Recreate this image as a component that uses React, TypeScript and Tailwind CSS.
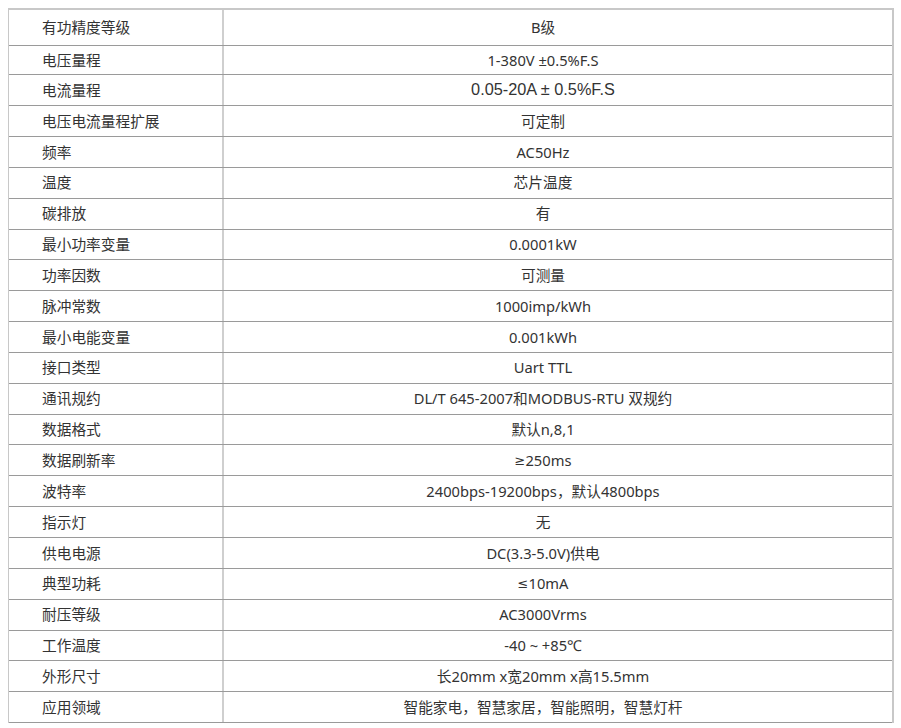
const ROWS: [string, React.ReactNode][] = [
  ['有功精度等级', 'B级'],
  ['电压量程', '1-380V ±0.5%F.S'],
  ['电流量程', '0.05-20A ± 0.5%F.S'],
  ['电压电流量程扩展', '可定制'],
  ['频率', 'AC50Hz'],
  ['温度', '芯片温度'],
  ['碳排放', '有'],
  ['最小功率变量', '0.0001kW'],
  ['功率因数', '可测量'],
  ['脉冲常数', '1000imp/kWh'],
  ['最小电能变量', '0.001kWh'],
  ['接口类型', 'Uart TTL'],
  ['通讯规约', 'DL/T 645-2007和MODBUS-RTU 双规约'],
  ['数据格式', '默认n,8,1'],
  ['数据刷新率', <><span className="font-['DejaVu_Sans',sans-serif] text-[13px]">≥</span>250ms</>],
  ['波特率', '2400bps-19200bps，默认4800bps'],
  ['指示灯', '无'],
  ['供电电源', 'DC(3.3-5.0V)供电'],
  ['典型功耗', <><span className="font-['DejaVu_Sans',sans-serif] text-[13px]">≤</span>10mA</>],
  ['耐压等级', 'AC3000Vrms'],
  ['工作温度', '-40 ~ +85℃'],
  ['外形尺寸', '长20mm x宽20mm x高15.5mm'],
  ['应用领域', '智能家电，智慧家居，智能照明，智慧灯杆'],
]

const HEIGHTS = ['h-[36px]', 'h-[29px]', 'h-[31px]', 'h-[31px]']

export default function App() {
  return (
    <div className="min-h-screen bg-white pt-[8px] pl-[8px] text-[#333] font-['Noto_Sans','Noto_Sans_CJK_SC',sans-serif]">
      <div className="w-[886px] border-t-2 border-l border-r-2 border-[#c8c8c8]">
        {ROWS.map(([k, v], i) => (
          <div key={k} className={`flex border-b border-[#9a9a9a] ${HEIGHTS[i] ?? 'h-[30.85px]'}`}>
            <div className="w-[215px] shrink-0 border-r-2 border-[#cfcfcf] pl-[33px] flex items-center text-[14.7px] leading-none">
              {k}
            </div>
            <div
              className={`flex-1 pr-[30px] flex items-center justify-center leading-none ${
                i === 2 ? "text-[16.3px] pb-[2px] font-['Liberation_Sans',Arial,sans-serif]" : 'text-[14.7px]'
              }`}
            >
              {v}
            </div>
          </div>
        ))}
      </div>
    </div>
  )
}
